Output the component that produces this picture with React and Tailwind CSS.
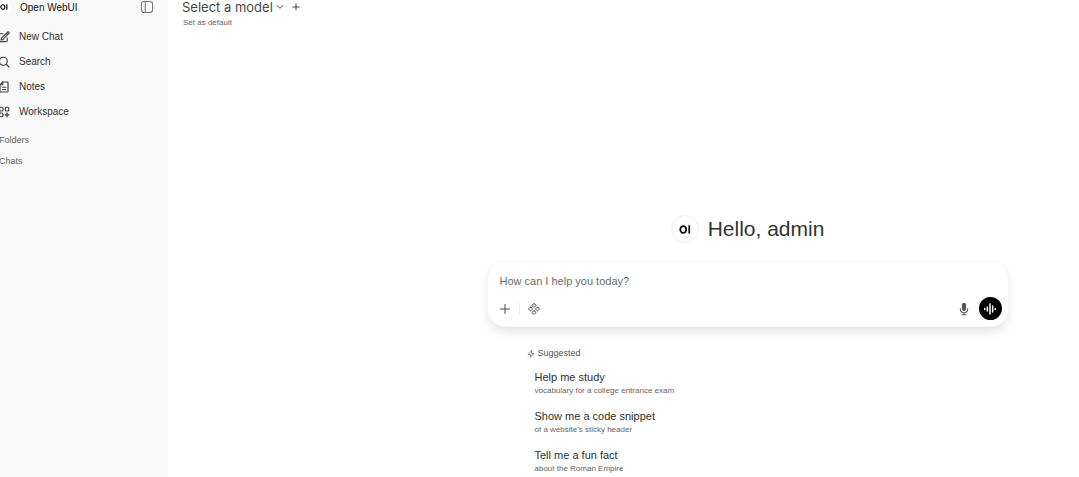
import React from "react";

function Logo({ className }) {
  return (
    <svg viewBox="0 0 24 18" className={className} fill="none" stroke="#111" strokeWidth="3.600" aria-hidden="true">
      <ellipse cx="8.500" cy="9" rx="6" ry="6.800" />
      <path d="M20.500 0.800v16.400" />
    </svg>
  );
}

function Icon({ className, strokeWidth = 1.8, children }) {
  return (
    <svg
      viewBox="0 0 24 24"
      className={className}
      fill="none"
      stroke="currentColor"
      strokeWidth={strokeWidth}
      strokeLinecap="round"
      strokeLinejoin="round"
      aria-hidden="true"
    >
      {children}
    </svg>
  );
}

const navItems = [
  {
    label: "New Chat",
    icon: (
      <>
        <path d="m16.900 4.500 1.700-1.700a1.900 1.900 0 1 1 2.600 2.600L10.600 16.100a4.500 4.500 0 0 1-1.900 1.100L6 18l.8-2.700a4.500 4.500 0 0 1 1.100-1.900l9-8.900Zm0 0 2.600 2.600" />
        <path d="M18.500 14v5a2.300 2.300 0 0 1-2.300 2.200H5A2.300 2.300 0 0 1 2.800 19V7.800A2.300 2.300 0 0 1 5 5.500h5" />
      </>
    ),
  },
  {
    label: "Search",
    icon: (
      <>
        <circle cx="10.500" cy="10.500" r="8" />
        <path d="m16.500 16.500 5.500 5.500" />
      </>
    ),
  },
  {
    label: "Notes",
    icon: (
      <>
        <path d="M9.500 2h9A1.500 1.500 0 0 1 20 3.500v17a1.500 1.500 0 0 1-1.500 1.500H5.500A1.500 1.500 0 0 1 4 20.500V7.500L9.500 2Z" />
        <path d="M9.500 2v5.500H4M9 12.500h6.500M9 17h6.500" />
      </>
    ),
  },
  {
    label: "Workspace",
    icon: (
      <>
        <rect x="3" y="2.500" width="7" height="7.500" rx="2.500" />
        <rect x="14.500" y="2.500" width="7" height="7.500" rx="2.500" />
        <rect x="3" y="14" width="7" height="7.500" rx="2.500" />
        <path d="M18 13.500v8.500M14 17.750h8" />
      </>
    ),
  },
];

const suggestions = [
  { title: "Help me study", text: "vocabulary for a college entrance exam" },
  { title: "Show me a code snippet", text: "of a website's sticky header" },
  { title: "Tell me a fun fact", text: "about the Roman Empire" },
];

function Sidebar() {
  return (
    <aside className="w-[168px] shrink-0 overflow-hidden bg-[#f9f9f9] text-[#303030]">
      <div className="-ml-1 flex h-[14px] items-center pr-[14px]">
        <span className="flex size-4 shrink-0 items-center justify-center rounded-full bg-white">
          <Logo className="h-[6px] w-2" />
        </span>
        <span className="ml-2 flex-1 text-[10px] font-medium text-[#111]">Open WebUI</span>
        <button aria-label="Toggle sidebar" className="text-[#777]">
          <Icon className="size-[14px]" strokeWidth={1.8}>
            <rect x="2.500" y="2.500" width="19" height="19" rx="4.500" />
            <path d="M9 2.500v19" />
          </Icon>
        </button>
      </div>
      <nav className="mt-[10px] -ml-[2px]">
        {navItems.map((item) => (
          <a key={item.label} href="#" className="flex h-[25px] items-center gap-[9px] text-[10px]">
            <Icon className="size-3 shrink-0 text-[#444]" strokeWidth={2.400}>
              {item.icon}
            </Icon>
            {item.label}
          </a>
        ))}
      </nav>
      <div className="-ml-px mt-[6px] text-[9px] text-[#666]">
        <button className="flex h-[21px] items-center">Folders</button>
        <button className="flex h-[21px] items-center">Chats</button>
      </div>
    </aside>
  );
}

function ModelSelector() {
  return (
    <header className="pl-[14px]">
      <div className="flex h-[14px] items-center text-[#484848]">
        <button className="flex items-center gap-[3px] font-['Inter',sans-serif] text-[13px] leading-[14px]">
          Select a model
          <Icon className="size-2" strokeWidth={3}>
            <path d="m4 8 8 8 8-8" />
          </Icon>
        </button>
        <button aria-label="Add model" className="ml-2">
          <Icon className="size-2" strokeWidth={3}>
            <path d="M12 3v18M3 12h18" />
          </Icon>
        </button>
      </div>
      <button className="mt-1 ml-px block text-[8px] leading-[10px] text-[#666]">Set as default</button>
    </header>
  );
}

function Composer() {
  return (
    <form
      onSubmit={(e) => e.preventDefault()}
      className="mt-[18px] w-full rounded-[18px] border border-[#f7f7f7] bg-white px-[6px] pt-[11px] pb-[6px] shadow-[0_6px_12px_-2px_rgba(0,0,0,0.12)]"
    >
      <input
        aria-label="Message"
        placeholder="How can I help you today?"
        className="block h-4 w-full px-[6px] text-[11px] text-[#333] outline-none placeholder:text-[#6b6b6b]"
      />
      <div className="mt-2 flex items-center text-[#444]">
        <button type="button" aria-label="More" className="ml-[5px]">
          <Icon className="size-3" strokeWidth={2}>
            <path d="M12 3v18M3 12h18" />
          </Icon>
        </button>
        <span className="mx-2 h-3 w-px bg-[#eee]" />
        <button type="button" aria-label="Integrations">
          <Icon className="size-3" strokeWidth={1.8}>
            <rect x="9" y="2" width="6" height="6" rx="1.500" transform="rotate(45 12 5)" />
            <rect x="9" y="16" width="6" height="6" rx="1.500" transform="rotate(45 12 19)" />
            <rect x="2" y="9" width="6" height="6" rx="1.500" transform="rotate(45 5 12)" />
            <rect x="16" y="9" width="6" height="6" rx="1.500" transform="rotate(45 19 12)" />
          </Icon>
        </button>
        <button type="button" aria-label="Dictate" className="ml-auto text-[#555]">
          <svg viewBox="0 0 20 20" className="size-[14px]" fill="currentColor" aria-hidden="true">
            <path d="M7 4a3 3 0 0 1 6 0v6a3 3 0 1 1-6 0V4Z" />
            <path d="M5.500 9.600a.75.75 0 0 0-1.500 0v.4a6 6 0 0 0 5.250 5.950v1.550h-2a.75.75 0 0 0 0 1.500h5.500a.75.75 0 0 0 0-1.500h-2v-1.550A6 6 0 0 0 16 10v-.4a.75.75 0 0 0-1.500 0v.4a4.500 4.500 0 0 1-9 0v-.4Z" />
          </svg>
        </button>
        <button
          type="button"
          aria-label="Voice mode"
          className="ml-2 flex size-[23px] items-center justify-center rounded-full bg-black text-white"
        >
          <Icon className="size-[14px]" strokeWidth={2.600}>
            <path d="M3 11v2M7.500 8.500v7M12 3.500v17M16.500 7v10M21 11v2" />
          </Icon>
        </button>
      </div>
    </form>
  );
}

export default function App() {
  return (
    <div className="flex min-h-screen bg-white font-['Liberation_Sans',Arial,sans-serif]">
      <Sidebar />
      <main className="min-w-0 flex-1">
        <ModelSelector />
        <section className="mt-[187px] flex justify-center pl-[248px]">
          <div className="w-full max-w-[522px]">
            <div className="flex items-center justify-center gap-[9px]">
              <span className="flex size-7 items-center justify-center rounded-full border border-[#eee]">
                <Logo className="h-[9px] w-3" />
              </span>
              <h1 className="text-[21px] leading-7 text-[#333]">Hello, admin</h1>
            </div>
            <Composer />
            <div className="mt-5 pl-10">
              <h2 className="flex h-[14px] items-center gap-[3px] text-[9px] text-[#555]">
                <Icon className="size-2" strokeWidth={2}>
                  <path d="M14 1.500 3 14h8l-1 8.500L21 10h-8l1-8.500Z" />
                </Icon>
                Suggested
              </h2>
              <ul className="mt-2 pl-2">
                {suggestions.map((s) => (
                  <li key={s.title} className="h-[39px]">
                    <button className="block text-left">
                      <span className="block text-[11px] leading-4 font-medium text-[#303030]">{s.title}</span>
                      <span className="block text-[8px] leading-[11px] text-[#666]">{s.text}</span>
                    </button>
                  </li>
                ))}
              </ul>
            </div>
          </div>
        </section>
      </main>
    </div>
  );
}
